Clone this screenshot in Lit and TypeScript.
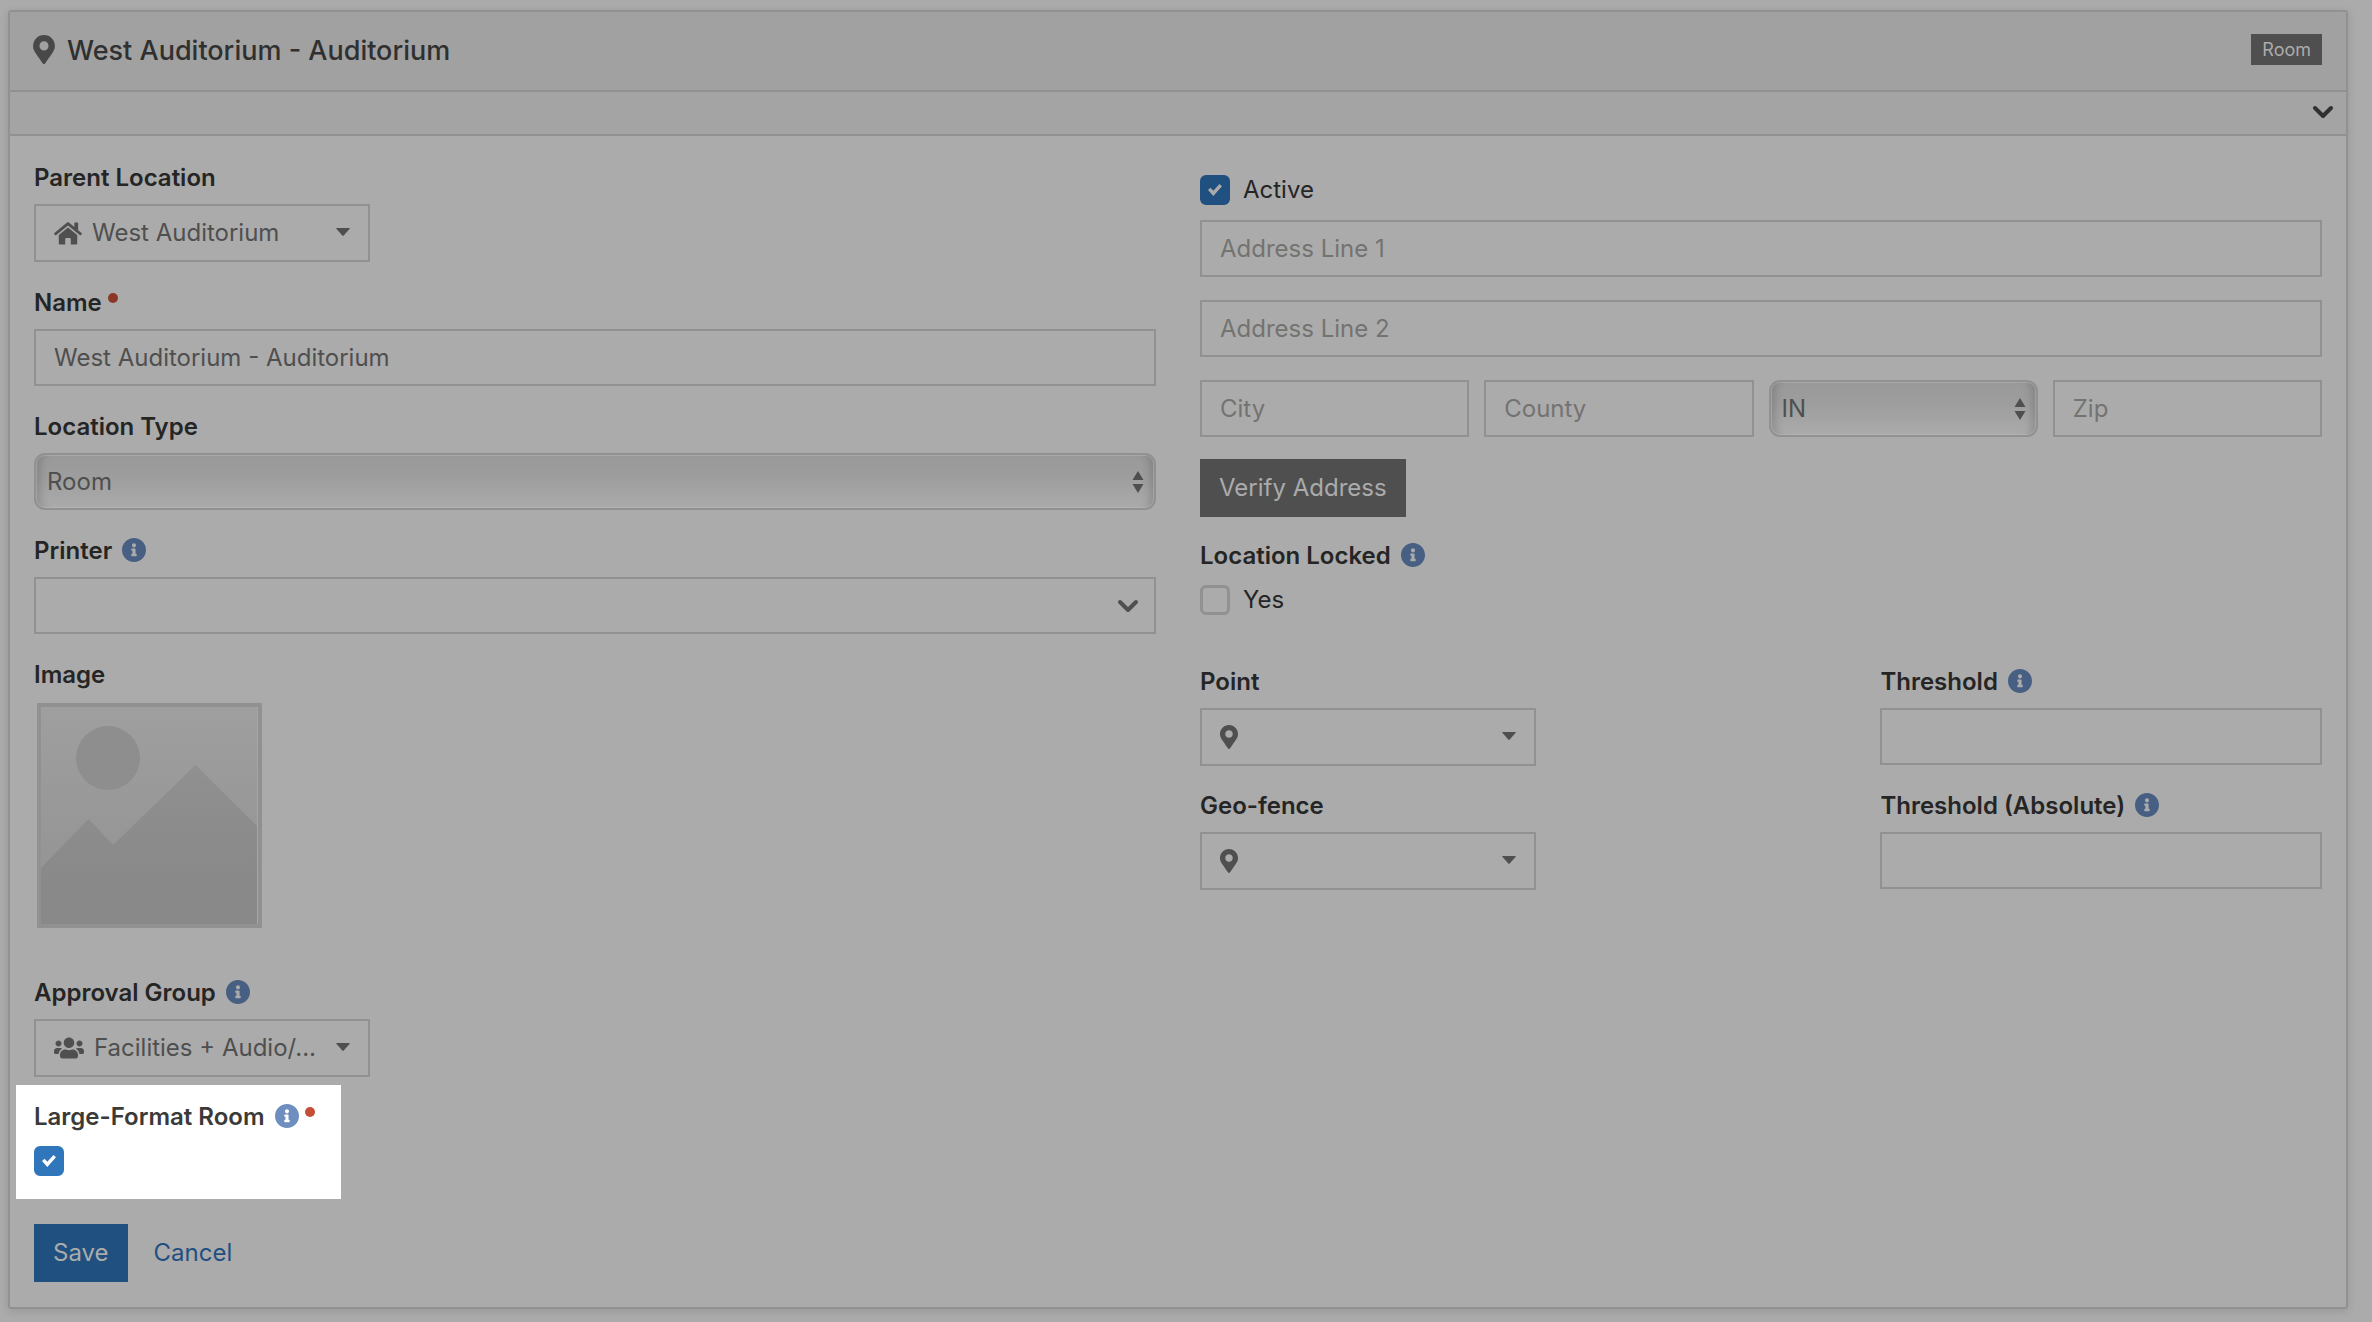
import { LitElement, html, css, svg, nothing, type TemplateResult } from "lit";
import { customElement, state } from "lit/decorators.js";

const PATHS: Record<string, { box: string; d: string }> = {
  pin: {
    box: "0 0 384 512",
    d: "M172.268 501.67C26.97 291.031 0 269.413 0 192 0 85.961 85.961 0 192 0s192 85.961 192 192c0 77.413-26.97 99.031-172.268 309.67-9.535 13.774-29.93 13.773-39.464 0zM192 272c44.183 0 80-35.817 80-80s-35.817-80-80-80-80 35.817-80 80 35.817 80 80 80z",
  },
  info: {
    box: "8 8 496 496",
    d: "M256 8C119.043 8 8 119.083 8 256c0 136.997 111.043 248 248 248s248-111.003 248-248C504 119.083 392.957 8 256 8zm0 110c23.196 0 42 18.804 42 42s-18.804 42-42 42-42-18.804-42-42 18.804-42 42-42zm56 254c0 6.627-5.373 12-12 12h-88c-6.627 0-12-5.373-12-12v-24c0-6.627 5.373-12 12-12h12v-64h-12c-6.627 0-12-5.373-12-12v-24c0-6.627 5.373-12 12-12h64c6.627 0 12 5.373 12 12v100h12c6.627 0 12 5.373 12 12v24z",
  },
  home: {
    box: "0 0 27 22",
    d: "M12.6.5Q13.5-.1 14.4.5L19.6 4.8V1.1Q19.6.4 20.3.4H22.6Q23.3.4 23.3 1.1V7.8L26.6 10.6Q27.1 11.2 26.6 11.8L26 12.5Q25.4 13 24.8 12.5L13.5 3.3L2.2 12.5Q1.6 13 1 12.5L.4 11.8Q-.1 11.2.4 10.6ZM13.5 5.2L22.4 12.5V20.7Q22.4 21.6 21.5 21.6H16.2V16.3Q16.2 15.4 15.3 15.4H11.7Q10.8 15.4 10.8 16.3V21.6H5.5Q4.6 21.6 4.6 20.7V12.5Z",
  },
  users: {
    box: "0 0 640 512",
    d: "M96 224c35.3 0 64-28.7 64-64s-28.7-64-64-64-64 28.7-64 64 28.7 64 64 64zm448 0c35.3 0 64-28.7 64-64s-28.7-64-64-64-64 28.7-64 64 28.7 64 64 64zm32 32h-64c-17.6 0-33.5 7.1-45.1 18.6 40.3 22.1 68.9 62 75.1 109.4h66c17.7 0 32-14.3 32-32v-32c0-35.3-28.7-64-64-64zm-256 0c61.9 0 112-50.1 112-112S381.9 32 320 32 208 82.1 208 144s50.1 112 112 112zm76.8 32h-8.3c-20.8 10-43.9 16-68.5 16s-47.6-6-68.5-16h-8.3C179.6 288 128 339.6 128 403.2V432c0 26.5 21.5 48 48 48h288c26.5 0 48-21.5 48-48v-28.8c0-63.6-51.6-115.2-115.2-115.2zm-223.7-13.4C161.5 263.1 145.6 256 128 256H64c-35.3 0-64 28.7-64 64v32c0 17.7 14.3 32 32 32h65.9c6.3-47.4 34.9-87.3 75.2-109.4z",
  },
  caret: { box: "0 0 14 8", d: "M1 0H13Q14.4 0 13.5 1L7.7 7.6Q7 8.2 6.3 7.6L.5 1Q-.4 0 1 0Z" },
  updown: { box: "0 0 12 22", d: "M6 0L11.5 9H.5ZM6 22L.5 13H11.5Z" },
};

const icon = (name: string, cls: string) => html`<svg class="icon ${cls}" viewBox=${PATHS[name].box} aria-hidden="true">
  ${svg`<path fill="currentColor" d=${PATHS[name].d} />`}
</svg>`;

const chevron = html`<svg class="icon chevron" viewBox="0 0 22 14" aria-hidden="true">
  <path d="M3 3L11 11L19 3" fill="none" stroke="currentColor" stroke-width="4" stroke-linecap="round" stroke-linejoin="round" />
</svg>`;

interface FieldOptions {
  info?: boolean;
  required?: boolean;
  spotlight?: boolean;
}

@customElement("app-root")
class AppRoot extends LitElement {
  @state() private active = true;
  @state() private locked = false;
  @state() private largeFormat = true;

  static styles = css`
    :host {
      --ink: #252525;
      --muted: #4f4f4f;
      --faint: #737371;
      --line: #919191;
      --surface: #ababab;
      --blue: #1f5080;
      --info: #485f84;
      --required: #8b3627;
      --tick: #ababab;
      display: block;
      box-sizing: border-box;
      min-height: 100vh;
      padding: 10px 24px 14px 8px;
      background: var(--surface);
      color: var(--ink);
      font-family: Inter, "Liberation Sans", sans-serif;
      font-size: 24px;
      line-height: 32px;
    }
    * {
      box-sizing: border-box;
    }
    .icon {
      display: block;
      flex: none;
    }
    .panel {
      border: 2px solid var(--line);
      border-radius: 3px;
      box-shadow: 0 2px 8px rgba(0, 0, 0, 0.12);
    }
    .head {
      display: flex;
      align-items: center;
      gap: 12px;
      padding: 19px 24px 19px 23px;
      border-bottom: 2px solid var(--line);
      background: #a1a1a1;
    }
    .title {
      flex: 1;
      margin: 0;
      color: #303030;
      font-size: 27px;
      font-weight: 500;
      line-height: 40px;
    }
    .title-pin {
      width: 22px;
      height: 29px;
      margin-bottom: 3px;
      color: #484848;
    }
    .badge {
      margin-bottom: 3px;
      padding: 0 11px;
      background: var(--muted);
      color: var(--surface);
      font-size: 18px;
      line-height: 31px;
    }
    .strip {
      display: flex;
      justify-content: flex-end;
      padding: 0 12px;
      border-bottom: 2px solid var(--line);
      background: #a4a4a4;
    }
    .toggle {
      display: flex;
      align-items: center;
      height: 42px;
      padding: 0 0 2px;
      border: 0;
      background: none;
      color: #303030;
    }
    .body {
      display: grid;
      grid-template-columns: 1fr 1fr;
      gap: 44px;
      padding: 25px 24px;
    }
    .column {
      display: flex;
      flex-direction: column;
      gap: 24px;
    }
    .right {
      gap: 22px;
      padding-top: 14px;
    }
    .field {
      display: flex;
      flex-direction: column;
      gap: 10px;
      padding-top: 1px;
    }
    .spotlight {
      --ink: #3a3a38;
      --info: #6d8ebf;
      --required: #c44e36;
      --blue: #2f76bb;
      --tick: #fff;
      width: fit-content;
      margin: -16px 0 0 -18px;
      padding: 16px 26px 23px 18px;
      background: #fff;
      color: var(--ink);
    }
    .label {
      display: flex;
      align-items: center;
      gap: 10px;
      width: fit-content;
      font-weight: 600;
    }
    .info {
      width: 24px;
      height: 24px;
      margin-bottom: 2px;
      color: var(--info);
    }
    .dot {
      align-self: flex-start;
      width: 10px;
      height: 10px;
      margin: 6px 0 0 -4px;
      border-radius: 50%;
      background: var(--required);
    }
    .chevron {
      width: 22px;
      height: 14px;
    }
    .text,
    .select,
    .picker,
    .button {
      width: 100%;
      height: 57px;
      margin: 0;
      border: 2px solid var(--line);
      border-radius: 0;
      background: transparent;
      color: var(--muted);
      font: inherit;
    }
    .text {
      padding: 0 18px;
    }
    .text::placeholder {
      color: var(--faint);
      opacity: 1;
    }
    .picker {
      display: flex;
      align-items: center;
      gap: 10px;
      width: 336px;
      height: 58px;
      padding: 0 18px;
      text-align: left;
    }
    .value {
      flex: 1;
    }
    .home {
      width: 28px;
      height: 23px;
    }
    .users {
      width: 30px;
      height: 24px;
    }
    .pin {
      width: 18px;
      height: 24px;
    }
    .caret {
      width: 14px;
      height: 8px;
      margin-bottom: 2px;
    }
    .combo {
      display: grid;
      align-items: center;
    }
    .combo > * {
      grid-area: 1 / 1;
    }
    .combo .icon {
      justify-self: end;
      margin-right: 17px;
      color: var(--muted);
      pointer-events: none;
    }
    .combo .updown {
      width: 12px;
      height: 22px;
      margin-right: 12px;
    }
    .select {
      appearance: none;
      padding: 0 36px 0 11px;
      border-radius: 11px;
      background: linear-gradient(#999, #9d9d9d 40%, #ababab);
      box-shadow:
        inset 0 0 0 1px rgba(190, 190, 190, 0.45),
        inset 11px 0 8px -7px rgba(0, 0, 0, 0.16),
        inset -11px 0 8px -7px rgba(0, 0, 0, 0.16);
    }
    .thumb {
      display: block;
      width: 225px;
      height: 225px;
      margin: 2px 3px 24px;
    }
    .check {
      display: flex;
      align-items: center;
      gap: 13px;
      width: fit-content;
      line-height: 30px;
    }
    .box {
      appearance: none;
      display: grid;
      place-items: center;
      width: 30px;
      height: 30px;
      margin: 0;
      border: 3px solid var(--line);
      border-radius: 6px;
    }
    .box:checked {
      border-color: var(--blue);
      background: var(--blue);
    }
    .box:checked::before {
      content: "";
      width: 14px;
      height: 12px;
      background: var(--tick);
      clip-path: polygon(0 50%, 18% 32%, 38% 56%, 82% 0, 100% 18%, 38% 100%);
    }
    .after-label {
      margin-top: 3px;
    }
    .address {
      display: flex;
      flex-direction: column;
      gap: 23px;
      margin-top: -7px;
    }
    .row {
      display: grid;
      grid-template-columns: repeat(4, 1fr);
      gap: 15px;
    }
    .button {
      width: fit-content;
      height: 58px;
      padding: 0 17px;
      border-color: var(--muted);
      background: var(--muted);
      color: var(--surface);
    }
    .geo {
      display: grid;
      grid-template-columns: 3fr 2fr;
      gap: 23px 18px;
      margin-top: 28px;
    }
    .actions {
      display: flex;
      align-items: center;
      gap: 26px;
      padding-top: 1px;
    }
    .save {
      border-color: var(--blue);
      background: var(--blue);
    }
    .cancel {
      color: var(--blue);
      text-decoration: none;
    }
  `;

  private field(id: string, label: string, control: TemplateResult, options: FieldOptions = {}) {
    return html`<div class="field ${options.spotlight ? "spotlight" : ""}">
      <label class="label" for=${id}>
        <span>${label}</span>
        ${options.info ? icon("info", "info") : nothing}
        ${options.required ? html`<span class="dot"></span>` : nothing}
      </label>
      ${control}
    </div>`;
  }

  private picker(id: string, glyph: string, value = "") {
    return html`<button type="button" class="picker" id=${id}>
      ${icon(glyph, glyph)}<span class="value">${value}</span>${icon("caret", "caret")}
    </button>`;
  }

  private text(id: string, value = "") {
    return html`<input class="text" type="text" id=${id} .value=${value} />`;
  }

  private hinted(id: string, hint: string) {
    return html`<input class="text" type="text" id=${id} placeholder=${hint} aria-label=${hint} />`;
  }

  private select(id: string, value: string, name?: string) {
    return html`<div class="combo">
      <select class="select" id=${id} aria-label=${name ?? nothing}>
        <option>${value}</option>
      </select>
      ${icon("updown", "updown")}
    </div>`;
  }

  private box(id: string, checked: boolean, update: (value: boolean) => void, cls = "") {
    return html`<input
      class="box ${cls}"
      type="checkbox"
      id=${id}
      .checked=${checked}
      @change=${(e: Event) => update((e.target as HTMLInputElement).checked)}
    />`;
  }

  private thumbnail() {
    return html`<svg class="thumb" id="image" viewBox="0 0 225 225" role="img" aria-label="Image placeholder">
      <defs>
        <linearGradient id="sky" x2="0" y2="1">
          <stop stop-color="#9f9f9f" />
          <stop offset="1" stop-color="#919191" />
        </linearGradient>
        <linearGradient id="hill" x2="0" y2="1">
          <stop stop-color="#909090" />
          <stop offset="0.7" stop-color="#898989" />
        </linearGradient>
      </defs>
      <rect x="2" y="2" width="221" height="221" fill="url(#sky)" />
      <circle cx="71" cy="55" r="32" fill="#8e8e8e" />
      <path d="M4 165L51.5 116L76 142L158.5 62L220 123V221H4Z" fill="url(#hill)" />
      <path d="M220.5 4V221" stroke="#a6a6a6" />
      <rect x="2" y="2" width="221" height="221" fill="none" stroke="#919191" stroke-width="4" />
    </svg>`;
  }

  render() {
    return html`<section class="panel">
      <header class="head">
        ${icon("pin", "title-pin")}
        <h1 class="title">West Auditorium - Auditorium</h1>
        <span class="badge">Room</span>
      </header>
      <div class="strip">
        <button type="button" class="toggle" aria-label="Toggle details">${chevron}</button>
      </div>
      <form class="body" @submit=${(e: Event) => e.preventDefault()}>
        <div class="column">
          ${this.field("parent", "Parent Location", this.picker("parent", "home", "West Auditorium"))}
          ${this.field("name", "Name", this.text("name", "West Auditorium - Auditorium"), { required: true })}
          ${this.field("type", "Location Type", this.select("type", "Room"))}
          ${this.field("printer", "Printer", html`<div class="combo">${this.text("printer")}${chevron}</div>`, { info: true })}
          ${this.field("image", "Image", this.thumbnail())}
          ${this.field("group", "Approval Group", this.picker("group", "users", "Facilities + Audio/..."), { info: true })}
          ${this.field(
            "large",
            "Large-Format Room",
            this.box("large", this.largeFormat, (v) => (this.largeFormat = v), "after-label"),
            { info: true, required: true, spotlight: true },
          )}
          <div class="actions">
            <button type="submit" class="button save">Save</button>
            <a class="cancel" href="#">Cancel</a>
          </div>
        </div>
        <div class="column right">
          <label class="check">${this.box("active", this.active, (v) => (this.active = v))}Active</label>
          <div class="address">
            ${this.hinted("address1", "Address Line 1")} ${this.hinted("address2", "Address Line 2")}
            <div class="row">
              ${this.hinted("city", "City")} ${this.hinted("county", "County")} ${this.select("state", "IN", "State")}
              ${this.hinted("zip", "Zip")}
            </div>
          </div>
          <button type="button" class="button">Verify Address</button>
          ${this.field(
            "locked",
            "Location Locked",
            html`<label class="check after-label">${this.box("locked", this.locked, (v) => (this.locked = v))}Yes</label>`,
            { info: true },
          )}
          <div class="geo">
            ${this.field("point", "Point", this.picker("point", "pin"))}
            ${this.field("threshold", "Threshold", this.text("threshold"), { info: true })}
            ${this.field("fence", "Geo-fence", this.picker("fence", "pin"))}
            ${this.field("absolute", "Threshold (Absolute)", this.text("absolute"), { info: true })}
          </div>
        </div>
      </form>
    </section>`;
  }
}
